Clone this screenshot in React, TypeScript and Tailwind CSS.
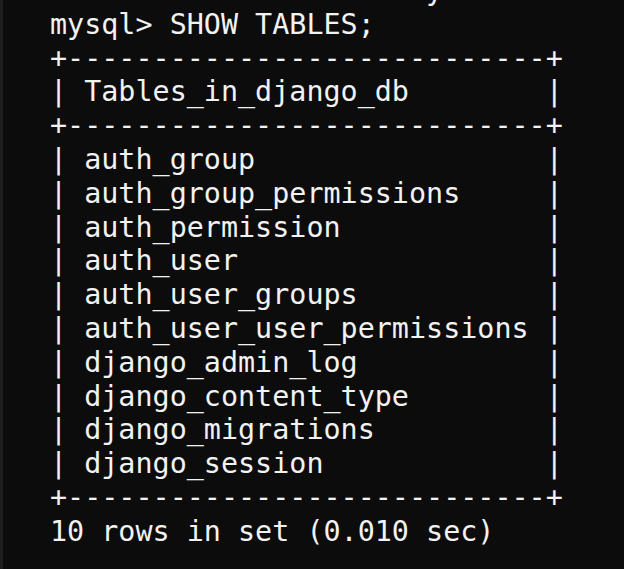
const tables = [
  "auth_group",
  "auth_group_permissions",
  "auth_permission",
  "auth_user",
  "auth_user_groups",
  "auth_user_user_permissions",
  "django_admin_log",
  "django_content_type",
  "django_migrations",
  "django_session",
];

const border = "+" + "-".repeat(28) + "+";
const row = (s: string) => "| " + s.padEnd(26, " ") + " |";

const lines = [
  "mysql> SHOW TABLES;",
  border,
  row("Tables_in_django_db"),
  border,
  ...tables.map(row),
  border,
  "10 rows in set (0.010 sec)",
];

export default function App() {
  return (
    <div className="w-[624px] h-[569px] overflow-hidden bg-[#0c0c0c] border-l-[3px] border-[#1e1e1e]">
      <div className="pl-[47px] font-['DejaVu_Sans_Mono',monospace] text-[28.4px] leading-[33.8px] text-[#f2f2f2] whitespace-pre">
        <div className="-mt-[26px]">Database set. Now ready</div>
        {lines.map((l, i) => (
          <div key={i}>{l}</div>
        ))}
      </div>
    </div>
  );
}
